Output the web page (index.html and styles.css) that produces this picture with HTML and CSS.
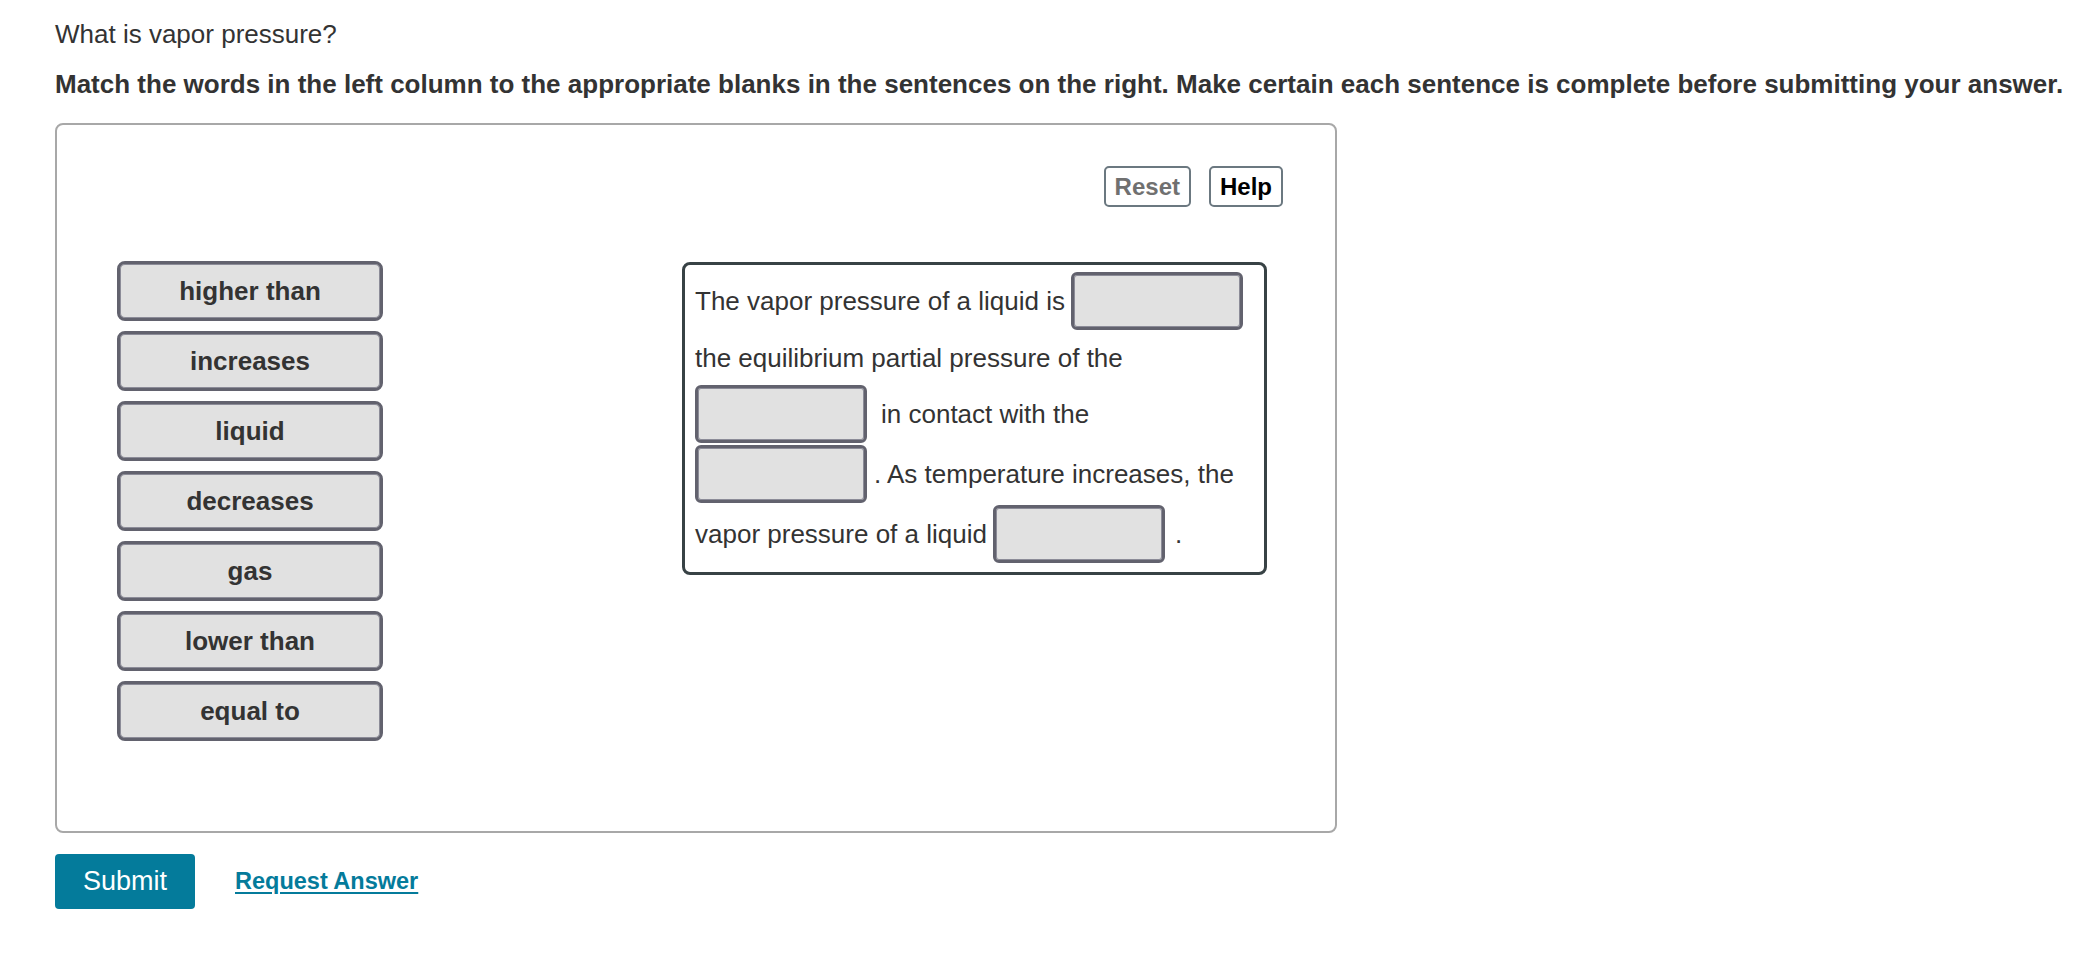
FILE: index.html
```html
<!DOCTYPE html>
<html lang="en">
<head>
<meta charset="utf-8">
<title>What is vapor pressure?</title>
<link rel="stylesheet" href="styles.css">
</head>
<body>
<main class="page">
  <p class="question">What is vapor pressure?</p>
  <p class="instructions">Match the words in the left column to the appropriate blanks in the sentences on the right. Make certain each sentence is complete before submitting your answer.</p>

  <section class="activity">
    <div class="toolbar">
      <button class="tool-btn tool-btn--disabled" type="button">Reset</button>
      <button class="tool-btn" type="button">Help</button>
    </div>

    <div class="workspace">
      <ul class="word-bank">
        <li class="word">higher than</li>
        <li class="word">increases</li>
        <li class="word">liquid</li>
        <li class="word">decreases</li>
        <li class="word">gas</li>
        <li class="word">lower than</li>
        <li class="word">equal to</li>
      </ul>

      <div class="sentences">
        <div class="row">
          <span class="txt">The vapor pressure of a liquid is</span>
          <span class="blank blank--after-text"></span>
        </div>
        <div class="row row--text">
          <span class="txt">the equilibrium partial pressure of the</span>
        </div>
        <div class="row">
          <span class="blank"></span>
          <span class="txt txt--wide-gap">in contact with the</span>
        </div>
        <div class="row">
          <span class="blank"></span>
          <span class="txt txt--gap">. As temperature increases, the</span>
        </div>
        <div class="row">
          <span class="txt">vapor pressure of a liquid</span>
          <span class="blank blank--after-text"></span>
          <span class="txt txt--period">.</span>
        </div>
      </div>
    </div>
  </section>

  <div class="actions">
    <button class="submit" type="button">Submit</button>
    <a class="request" href="#">Request Answer</a>
  </div>
</main>
</body>
</html>
```

FILE: styles.css
```css
* {
  box-sizing: border-box;
}

html, body {
  margin: 0;
  padding: 0;
  background: #ffffff;
}

body {
  font-family: "Liberation Sans", Arial, Helvetica, sans-serif;
  color: #333333;
}

.page {
  padding: 19px 0 0 55px;
}

.question {
  margin: 0;
  font-size: 26px;
  line-height: 30px;
  font-weight: normal;
}

.instructions {
  margin: 20px 0 0 0;
  font-size: 26px;
  line-height: 30px;
  font-weight: bold;
  white-space: nowrap;
}

.activity {
  margin-top: 24px;
  width: 1282px;
  border: 2px solid #a8a8a8;
  border-radius: 8px;
  padding: 41px 52px 90px 60px;
}

.toolbar {
  display: flex;
  justify-content: flex-end;
  gap: 18px;
  height: 41px;
}

.tool-btn {
  height: 41px;
  padding: 0 9px;
  border: 2px solid #6b7880;
  border-radius: 5px;
  background: #ffffff;
  font-family: "Liberation Sans", Arial, Helvetica, sans-serif;
  font-size: 24px;
  font-weight: bold;
  line-height: 37px;
  color: #000000;
}

.tool-btn--disabled {
  color: #707070;
}

.workspace {
  display: flex;
  align-items: flex-start;
  gap: 299px;
  margin-top: 54px;
}

.word-bank {
  list-style: none;
  margin: 0;
  padding: 0;
  display: flex;
  flex-direction: column;
  gap: 10px;
  width: 266px;
}

.word {
  height: 60px;
  border: 3px solid #62626e;
  border-radius: 8px;
  background: #e1e1e1;
  box-shadow: inset 0 0 0 1px #8c8c98;
  display: flex;
  align-items: center;
  justify-content: center;
  font-size: 26px;
  font-weight: bold;
  color: #333333;
}

.sentences {
  margin-top: 1px;
  width: 585px;
  border: 3px solid #384245;
  border-radius: 8px;
  padding: 7px 10px 9px 10px;
  display: flex;
  flex-direction: column;
  gap: 2px;
}

.row {
  display: flex;
  align-items: center;
  height: 58px;
}

.row--text {
  height: 51px;
}

.txt {
  font-size: 26px;
  line-height: 30px;
  color: #333333;
  white-space: nowrap;
}

.txt--wide-gap {
  margin-left: 14px;
}

.txt--gap {
  margin-left: 7px;
}

.txt--period {
  margin-left: 10px;
}

.blank {
  display: block;
  width: 172px;
  height: 58px;
  border: 3px solid #62626e;
  border-radius: 6px;
  background: #e1e1e1;
  box-shadow: inset 0 0 0 1px #8c8c98;
  flex: none;
}

.blank--after-text {
  margin-left: 6px;
}

.actions {
  display: flex;
  align-items: center;
  gap: 40px;
  margin-top: 21px;
}

.submit {
  width: 140px;
  height: 55px;
  border: none;
  border-radius: 4px;
  background: #047b9b;
  color: #ffffff;
  font-family: "Liberation Sans", Arial, Helvetica, sans-serif;
  font-size: 27px;
  font-weight: normal;
  padding: 0;
}

.request {
  font-size: 23.5px;
  font-weight: bold;
  color: #047b9b;
  text-decoration: underline;
  text-underline-offset: 3px;
}
```
